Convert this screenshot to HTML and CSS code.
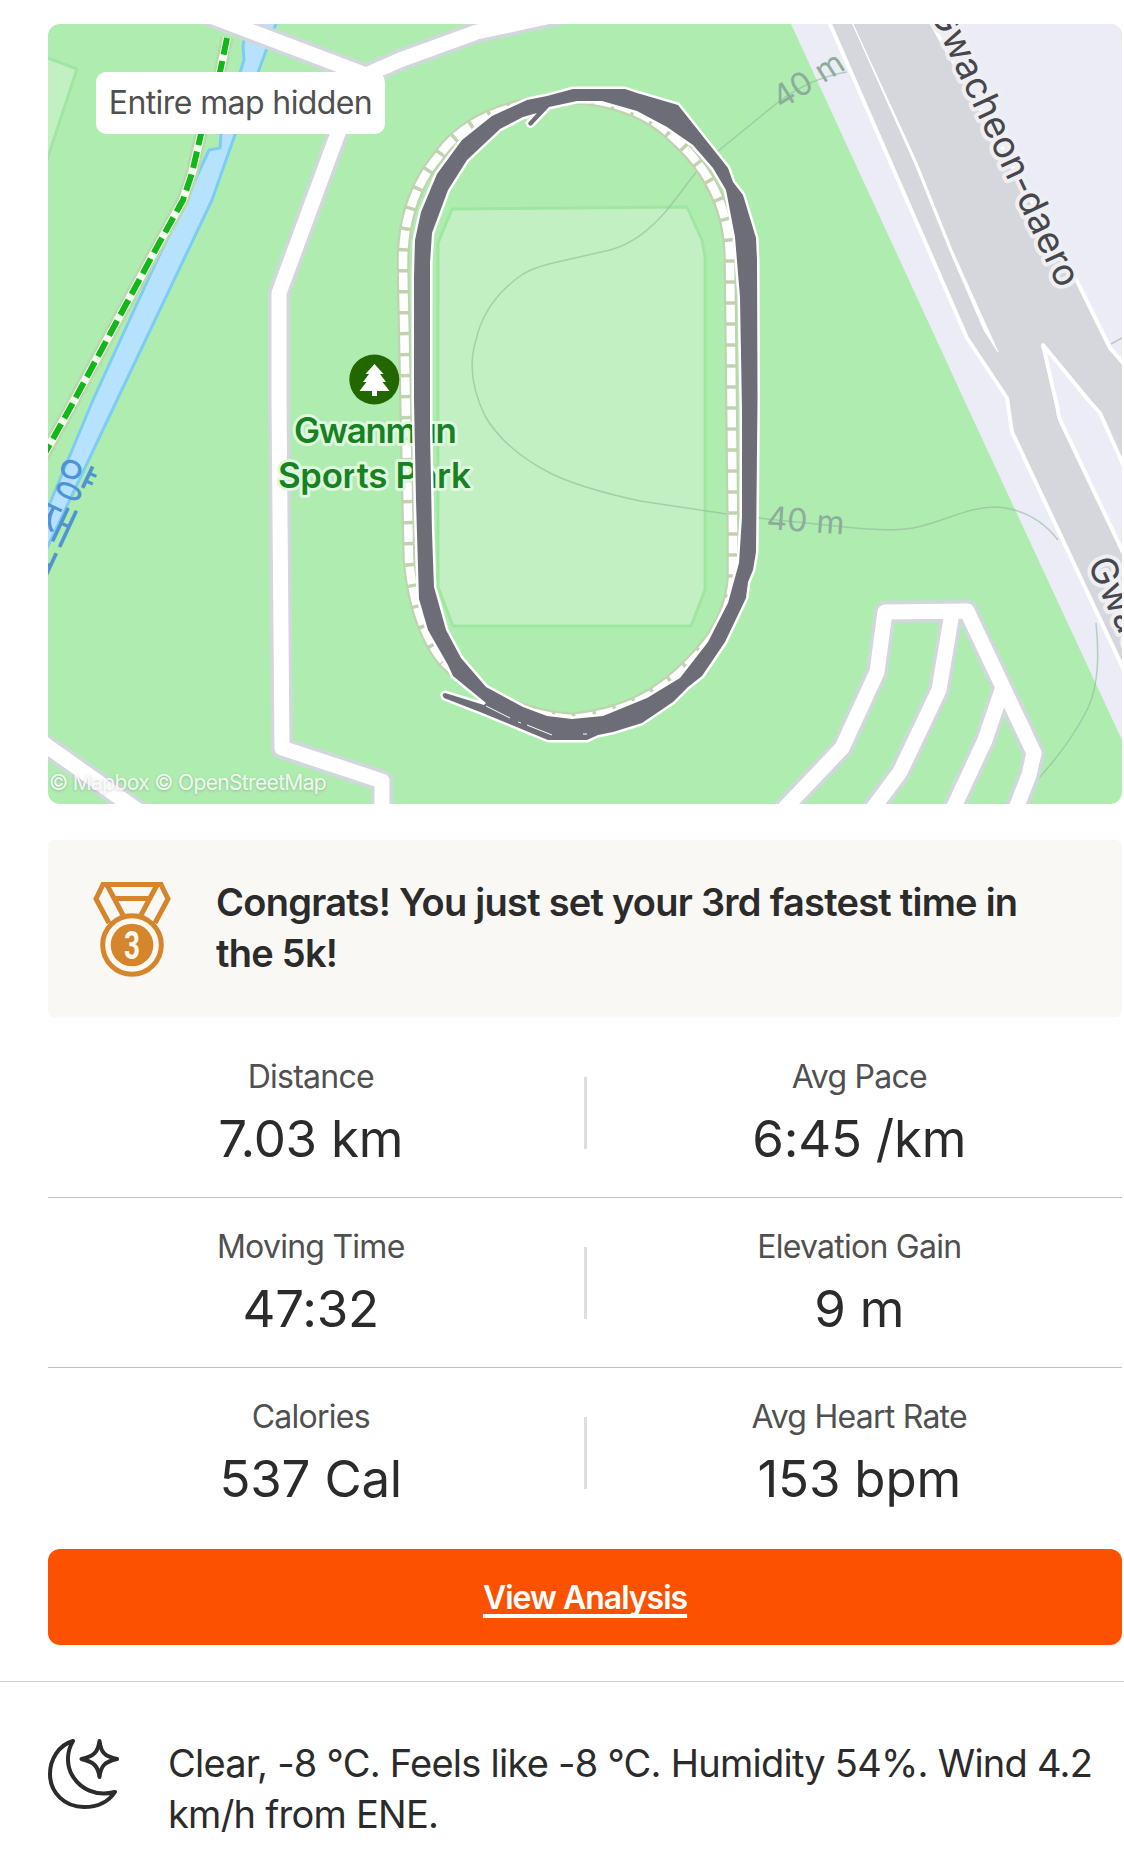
FILE: index.html
```html
<!DOCTYPE html>
<html lang="en">
  <head>
    <meta charset="UTF-8" />
    <meta name="viewport" content="width=device-width, initial-scale=1.0" />
    <title>Activity</title>
    <link rel="stylesheet" href="styles.css">
  </head>
  <body>
    <main class="activity">
      <div class="map">
        <svg class="map-canvas" viewBox="48 24 1074 780">
          <!-- fields -->
          <path class="pitch" d="M40 55L77 69L48 157L40 175Z" />
          <path class="pitch" d="M452 209L687 207L702 240L705 257V590L691 626H453L438 587V243Z" />

          <!-- stream and trail -->
          <path class="water" d="M250 10L243 46L244 60L221 133L220 148L209 150L180 213L157 260L93 400L40 527V563L117 400L212 200L232 143L281 10Z" />
          <path class="trail-case" d="M227 38L220 72L201 134L192 173L183 200L157 247L69 410L40 462" />
          <path class="trail-line" d="M227 38L220 72L201 134L192 173L183 200L157 247L69 410L40 462" />
          <path class="trail-dash" d="M227 38L220 72L201 134L192 173L183 200L157 247L69 410L40 462" />

          <!-- residential side -->
          <path class="block" d="M791 24H1122V740L966 404Z" />
          <path class="highway" d="M823 10L830 24L967 338L1007 398L1012 432L1130 683V371L1110 348L1078 283L932 24L925 10Z" />
          <path class="block edge" d="M1043 345L1058 410Q1058 416 1062 424L1130 567V480L1100 413L1090 402Z" />
          <path class="median" d="M851 20L917 163L952 250L998 352L984 330L950 251L915 164Z" />

          <path class="contour" d="M847 72Q810 78 777 103L717 152Q705 160 690 180T667 210Q640 242 610 250L553 263Q535 267 523 274Q485 300 476 340Q465 375 485 416Q505 450 550 473Q580 488 640 501L727 514L767 519" />
          <path class="contour" d="M767 519L845 527Q890 532 913 528C945 522 965 507 997 507Q1035 510 1058 540" />
          <path class="contour" d="M1096 623Q1102 680 1087 710Q1070 744 1038 779M1111 344L1122 338" />

          <!-- roads: casing first, then fill -->
          <g class="road-case">
            <path d="M200 12L366 75L400 60L477 32L560 14M366 75L338 133L279 293V400L282 748L382 781V812M30 734L140 812" />
            <path d="M782 811L842 748L877 672L885 612L967 611L1034 753L1029 775L1015 811M952 613L939 690L900 772L871 811M1003 687L985 740L952 811" />
          </g>
          <g class="road-fill">
            <path d="M200 12L366 75L400 60L477 32L560 14M366 75L338 133L279 293V400L282 748L382 781V812M30 734L140 812" />
            <path d="M782 811L842 748L877 672L885 612L967 611L1034 753L1029 775L1015 811M952 613L939 690L900 772L871 811M1003 687L985 740L952 811" />
          </g>

          <!-- running track -->
          <path class="track-case" d="M443 661Q415 625 409 560L407 467L403 267Q402 200 438 157Q475 102 580 98Q640 104 673 137Q730 187 730 260L733 533V580C730 610 717 633 701 651C660 698 620 714 572 719C530 717 480 697 443 661Z" />
          <path class="track-line" d="M443 661Q415 625 409 560L407 467L403 267Q402 200 438 157Q475 102 580 98Q640 104 673 137Q730 187 730 260L733 533V580C730 610 717 633 701 651C660 698 620 714 572 719C530 717 480 697 443 661Z" />

          <!-- labels -->
          <text class="elevation" transform="translate(781 110) rotate(-32)">40 m</text>
          <text class="elevation" transform="translate(766 529) rotate(4)">40 m</text>
          <text class="street" textLength="307" transform="translate(929 11) rotate(65)">Gwacheon-daero</text>
          <text class="street" textLength="307" transform="translate(1087 564) rotate(65)">Gwacheon-daero</text>
          <text class="stream" transform="translate(73 482) rotate(25)" dy="14">양</text>
          <text class="stream" transform="translate(54 525) rotate(25)" dy="14">재</text>
          <text class="stream" transform="translate(35 568) rotate(25)" dy="14">천</text>
          <text class="park" x="294" y="443" textLength="163">Gwanmun</text>
          <text class="park" x="278" y="488" textLength="193">Sports Park</text>
          <circle cx="374.300" cy="379.500" r="25" fill="#226700" />
          <path fill="#fff" d="M374.500 364l9 10h-3.500l6 8h-3.500l7 9H377v5h-5v-5h-12.500l7-9H363l6-8h-3.500z" />

          <!-- recorded route -->
          <path class="route" fill-rule="evenodd" d="M415 240L421 212L437 174L462 140L492 116L527 100L547 96L573 89H625L637 93L678 105L728 168L733 182L743 195L756 238L757 260L757.500 400L756 552L753 570L748 582L746 598L725 642L702 676L688 687L673 702L642 723L613 732L598 735L587 740H548L480 712L444 698Q441 694 445 693L484 705L486 703L453 676L448 665L428 630L419 599L416 500L414 400V277Z
            M430 263L432 233L448 190L467 160L500 129L523 117L537 113L528 123Q529 127 532 125L549 107L577 101L602 101L637 111L667 127L693 145L713 168L726 190L735 237L740 297L742 410V517L739 563L728 603L708 642L680 678L647 698L603 716L572 719L547 716L523 707L486 687L461 658L446 630L434 587L432 533L430 433Z" />
          <path class="route-gap" d="M486 706L510 718M518 722L521 723M527 725L552 735M583 734H587" />
        </svg>
        <span class="map-badge">Entire map hidden</span>
        <span class="map-credit">© Mapbox © OpenStreetMap</span>
      </div>

      <div class="achievement">
        <svg class="medal" viewBox="0 0 78 95">
          <g fill="none" stroke="#d5852c" stroke-width="5">
            <path d="M16 41L3 17L10 2.500H68L75 17L62 41M14 3L30 33M64 3L48 33M22 16.500H56" />
            <circle cx="39" cy="63" r="29.300" fill="#fef9f0" />
          </g>
          <circle cx="39" cy="63" r="21.300" fill="#d5852c" />
          <text x="31" y="77" textLength="16" lengthAdjust="spacingAndGlyphs">3</text>
        </svg>
        <p class="achievement-text">Congrats! You just set your 3rd fastest time in the 5k!</p>
      </div>

      <ul class="stats">
        <li>
          <div class="stat"><span class="label">Distance</span><span class="value">7.03 km</span></div>
          <div class="stat"><span class="label">Avg Pace</span><span class="value">6:45 /km</span></div>
        </li>
        <li>
          <div class="stat"><span class="label">Moving Time</span><span class="value">47:32</span></div>
          <div class="stat"><span class="label">Elevation Gain</span><span class="value">9 m</span></div>
        </li>
        <li>
          <div class="stat"><span class="label">Calories</span><span class="value">537 Cal</span></div>
          <div class="stat"><span class="label">Avg Heart Rate</span><span class="value">153 bpm</span></div>
        </li>
      </ul>

      <a class="analysis" href="#">View Analysis</a>
    </main>

    <section class="weather">
      <svg class="moon" viewBox="0 0 72 72">
        <path d="M25 2C11 6 2 20 2 35C2 54 17 68 36 68C50 68 61 62 67 53C48 58 32 50 24 36C18 25 19 12 25 2Z" />
        <path d="M51.500 2C53 13 56 17.500 69 20C56 23 53 27 51.500 38C50 27 46 23 33.500 20C46 17.500 50 13 51.500 2Z" />
      </svg>
      <p class="weather-text">Clear, -8 °C. Feels like -8 °C. Humidity 54%. Wind 4.2 km/h from ENE.</p>
    </section>
  </body>
</html>
```
FILE: styles.css
```css
* {
  box-sizing: border-box;
}

body {
  margin: 0;
  background: #fff;
  color: #2b2b2b;
  font-family: Inter, "Liberation Sans", sans-serif;
}

.activity {
  padding: 24px 2px 36px 48px;
}

.map {
  position: relative;
  height: 780px;
  border-radius: 12px;
  overflow: hidden;
  background: #afecb0;
}

.map-canvas {
  display: block;
  width: 100%;
  height: 100%;
}

.map-canvas path {
  stroke-linejoin: round;
}

.pitch {
  fill: #c2f0c2;
  stroke: #9fe7a0;
  stroke-width: 3;
}

.water {
  fill: #b7e2ff;
  stroke: #7ecbf5;
  stroke-width: 3;
}

.trail-case,
.trail-line,
.trail-dash,
.contour,
.road-case,
.road-fill,
.track-case,
.track-line,
.route-gap {
  fill: none;
}

.trail-case {
  stroke: #b9d8ae;
  stroke-width: 13;
}

.trail-line {
  stroke: #f4fff0;
  stroke-width: 8;
}

.trail-dash {
  stroke: #12b81a;
  stroke-width: 6;
  stroke-dasharray: 17 6.500;
}

.block {
  fill: #ebecf5;
}

.highway {
  fill: #d6d7dc;
  stroke: #fff;
  stroke-width: 4;
}

.edge {
  stroke: #fff;
  stroke-width: 4;
}

.median {
  fill: #fff;
  stroke: #fff;
  stroke-width: 1;
}

.contour {
  stroke: #8fb99b;
  stroke-opacity: 0.6;
  stroke-width: 1.5;
}

.road-case {
  stroke: #d1d7dd;
  stroke-width: 22;
}

.road-fill {
  stroke: #fff;
  stroke-width: 15;
}

.track-case {
  stroke: #bfd3b0;
  stroke-width: 13;
}

.track-line {
  stroke: #fff;
  stroke-width: 8.5;
  stroke-dasharray: 17.500 3.500;
}

.elevation {
  fill: #8bad99;
  font-size: 32px;
}

.street {
  fill: #46464d;
  font-size: 37px;
  stroke: #efeff3;
  stroke-width: 8;
  stroke-linejoin: round;
  paint-order: stroke;
}

.stream {
  fill: #4f93d6;
  font-family: "Noto Sans CJK KR", sans-serif;
  font-size: 44px;
  text-anchor: middle;
}

.park {
  fill: #168222;
  font-size: 35px;
  font-weight: 600;
  stroke: #dff7df;
  stroke-width: 6;
  stroke-linejoin: round;
  paint-order: stroke;
}

.route {
  fill: #6d6d78;
  stroke: #fff;
  stroke-width: 5;
  paint-order: stroke;
}

.route-gap {
  stroke: #fff;
  stroke-width: 1;
}

.map-badge {
  position: absolute;
  left: 48px;
  top: 48px;
  width: 289px;
  height: 62px;
  border-radius: 10px;
  background: #fff;
  color: #505050;
  font-size: 32px;
  letter-spacing: -0.6px;
  line-height: 62px;
  text-align: center;
}

.map-credit {
  position: absolute;
  left: 1px;
  bottom: 8px;
  color: rgba(255, 255, 255, 0.85);
  font-size: 21px;
  letter-spacing: -0.65px;
  line-height: 26px;
  text-shadow: 0 1px 3px rgba(0, 0, 0, 0.2);
}

.achievement {
  display: flex;
  height: 177px;
  margin-top: 36px;
  padding: 37px 60px 0 45px;
  border-radius: 6px;
  background: #f9f8f5;
}

.medal {
  flex: none;
  width: 78px;
  height: 95px;
  margin-top: 5px;
}

.medal text {
  fill: #fef9f0;
  font-family: Roboto, sans-serif;
  font-size: 39px;
  font-weight: 700;
}

.achievement-text {
  margin: 0 0 0 45px;
  font-size: 38px;
  font-weight: 600;
  letter-spacing: -0.75px;
  line-height: 51px;
}

.stats {
  margin: 10px 0 0;
  padding: 0;
  list-style: none;
}

.stats li {
  display: flex;
  height: 170px;
  padding-top: 28px;
}

.stats li + li {
  border-top: 1px solid #c0c0c0;
  padding-top: 27px;
}

.stat {
  position: relative;
  display: flex;
  flex: 1;
  flex-direction: column;
  align-items: center;
  padding-right: 15px;
}

.stat + .stat {
  padding: 0 0 0 8px;
}

.stat + .stat::before {
  content: "";
  position: absolute;
  left: -5px;
  top: 22px;
  width: 3px;
  height: 72px;
  background: #dedede;
}

.label {
  color: #505050;
  font-size: 32px;
  letter-spacing: -0.75px;
  line-height: 44px;
}

.value {
  font-size: 51px;
  letter-spacing: -0.2px;
  line-height: 80px;
}

.analysis {
  display: flex;
  align-items: center;
  justify-content: center;
  height: 96px;
  margin-top: 12px;
  border-radius: 12px;
  background: #fc5200;
  color: #fff;
  font-size: 32px;
  font-weight: 600;
  letter-spacing: -1px;
  text-decoration: underline;
  text-decoration-thickness: 4px;
  text-underline-offset: 5px;
  text-decoration-skip-ink: none;
}

.weather {
  display: flex;
  padding: 56px 24px 0 48px;
  border-top: 1px solid #cfd1ce;
}

.moon {
  flex: none;
  width: 72px;
  height: 72px;
  margin-top: 1px;
}

.moon path {
  fill: none;
  stroke: #2b2b2b;
  stroke-width: 4;
  stroke-linejoin: round;
}

.weather-text {
  margin: 0 0 0 48px;
  font-size: 38px;
  letter-spacing: -0.75px;
  line-height: 51px;
}
```
